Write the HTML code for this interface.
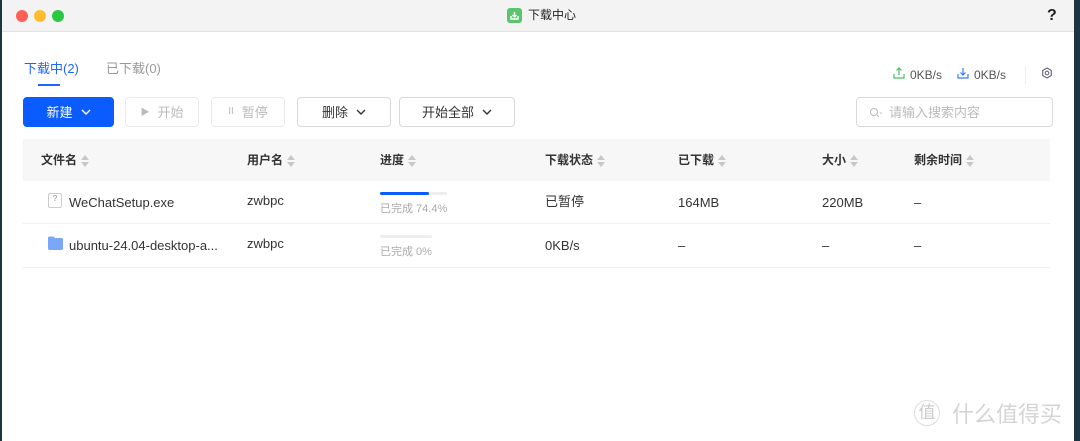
<!DOCTYPE html>
<html><head><meta charset="utf-8"><style>
*{box-sizing:border-box;margin:0;padding:0}
body{width:1080px;height:441px;overflow:hidden;background:#1d3540;font-family:"Liberation Sans","Noto Sans CJK SC",sans-serif;position:relative}
.win{position:absolute;left:2px;top:0;width:1072px;height:441px;background:#fff}
.tb{position:absolute;left:0;top:0;width:100%;height:32px;background:#f3f3f3;border-bottom:1px solid #e2e2e2}
.dot{position:absolute;top:10px;width:12px;height:12px;border-radius:50%}
.abs{position:absolute;white-space:nowrap;line-height:1.2}
.btn{position:absolute;top:97px;height:30px;border:1px solid #d9d9d9;border-radius:4px;background:#fff;font-size:13px;color:#333;display:flex;align-items:center;justify-content:center;gap:8px;line-height:1}
.dis{border-color:#ebebeb;color:#bbb}
.th{font-size:12px;color:#333;font-weight:bold;top:153px}
.sort{display:inline-block;vertical-align:middle;margin-left:4px;width:8px;height:12px;position:relative}
.sort:before{content:"";position:absolute;left:0;top:0;border:4px solid transparent;border-bottom:5px solid #c8c8c8;border-top:0}
.sort:after{content:"";position:absolute;left:0;top:7px;border:4px solid transparent;border-top:5px solid #c8c8c8;border-bottom:0}
.td{font-size:13px;color:#333}
.sm{font-size:11px;color:#aaa}
</style></head><body>
<div class="win">
<div class="tb">
<div class="dot" style="left:14px;background:#fe5f57"></div>
<div class="dot" style="left:32px;background:#febc2e"></div>
<div class="dot" style="left:50px;background:#28c840"></div>
<div class="abs" style="left:505px;top:8px;width:15px;height:15px;border-radius:3px;background:#5bc46f"><svg width="15" height="15" viewBox="0 0 15 15"><path d="M4 8v3h7V8M7.5 4v5M5.5 7l2 2 2-2" stroke="#fff" stroke-width="1.4" fill="none"/></svg></div>
<div class="abs" style="left:526px;top:8px;font-size:12px;color:#222">下载中心</div>
<div class="abs" style="left:1045px;top:6px;font-size:16px;color:#222;font-weight:bold">?</div>
</div>
<div class="abs" style="left:22px;top:61px;font-size:13px;color:#1a66ff">下载中(2)</div>
<div class="abs" style="left:36px;top:84px;width:22px;height:2px;background:#1a66ff"></div>
<div class="abs" style="left:104px;top:61px;font-size:13px;color:#999">已下载(0)</div>
<svg class="abs" style="left:891px;top:67px" width="12" height="12" viewBox="0 0 12 12"><path d="M1 7v4h10V7M6 1v7M3.5 3.5L6 1l2.5 2.5" stroke="#4cbf62" stroke-width="1.2" fill="none"/></svg>
<div class="abs" style="left:908px;top:68px;font-size:12px;color:#555">0KB/s</div>
<svg class="abs" style="left:955px;top:67px" width="12" height="12" viewBox="0 0 12 12"><path d="M1 7v4h10V7M6 1v7M3.5 5.5L6 8l2.5-2.5" stroke="#3b7cf5" stroke-width="1.2" fill="none"/></svg>
<div class="abs" style="left:972px;top:68px;font-size:12px;color:#555">0KB/s</div>
<div class="abs" style="left:1023px;top:66px;width:1px;height:18px;background:#eee"></div>
<svg class="abs" style="left:1039px;top:67px" width="12" height="12" viewBox="0 0 12 12"><path d="M6 1l4.3 2.5v5L6 11 1.7 8.5v-5z" stroke="#667" stroke-width="1.1" fill="none"/><circle cx="6" cy="6" r="1.8" stroke="#667" stroke-width="1.1" fill="none"/></svg>
<div class="btn" style="left:21px;width:91px;background:#0a5cff;border-color:#0a5cff;color:#fff">新建 <svg width="10" height="6"><path d="M1 1l4 4 4-4" stroke="#fff" stroke-width="1.4" fill="none"/></svg></div>
<div class="btn dis" style="left:123px;width:74px"><span style="font-size:9px">▶</span> 开始</div>
<div class="btn dis" style="left:209px;width:74px"><span style="font-size:10px">II</span> 暂停</div>
<div class="btn" style="left:295px;width:94px">删除 <svg width="10" height="6"><path d="M1 1l4 4 4-4" stroke="#333" stroke-width="1.4" fill="none"/></svg></div>
<div class="btn" style="left:397px;width:116px">开始全部 <svg width="10" height="6"><path d="M1 1l4 4 4-4" stroke="#333" stroke-width="1.4" fill="none"/></svg></div>
<div class="btn" style="left:854px;width:197px;justify-content:flex-start;padding-left:12px;color:#bbb"><svg width="14" height="10"><circle cx="5" cy="5" r="3.5" stroke="#bbb" fill="none"/><path d="M8 8l2 2M11 6h2" stroke="#bbb"/></svg><span style="margin-left:-2px">请输入搜索内容</span></div>
<div class="abs" style="left:21px;top:139px;width:1027px;height:42px;background:#f7f7f8"></div>
<div class="abs th" style="left:39px">文件名<span class="sort"></span></div>
<div class="abs th" style="left:245px">用户名<span class="sort"></span></div>
<div class="abs th" style="left:378px">进度<span class="sort"></span></div>
<div class="abs th" style="left:543px">下载状态<span class="sort"></span></div>
<div class="abs th" style="left:676px">已下载<span class="sort"></span></div>
<div class="abs th" style="left:820px">大小<span class="sort"></span></div>
<div class="abs th" style="left:912px">剩余时间<span class="sort"></span></div>
<div class="abs" style="left:21px;top:223px;width:1027px;height:1px;background:#efefef"></div>
<div class="abs" style="left:21px;top:267px;width:1027px;height:1px;background:#efefef"></div>
<div class="abs" style="left:46px;top:193px;width:14px;height:15px;border:1px solid #ccc;border-radius:2px;font-size:8px;color:#888;text-align:center;line-height:10px">?</div>
<div class="abs td" style="left:67px;top:195px">WeChatSetup.exe</div>
<div class="abs td" style="left:245px;top:193px">zwbpc</div>
<div class="abs" style="left:378px;top:192px;width:67px;height:3px;background:#eee;border-radius:2px"><div style="width:49px;height:3px;background:#0a5cff;border-radius:2px"></div></div>
<div class="abs sm" style="left:378px;top:203px">已完成 74.4%</div>
<div class="abs td" style="left:543px;top:194px">已暂停</div>
<div class="abs td" style="left:676px;top:195px">164MB</div>
<div class="abs td" style="left:820px;top:195px">220MB</div>
<div class="abs td" style="left:912px;top:195px">–</div>
<svg class="abs" style="left:46px;top:236px" width="15" height="14"><path d="M0 2a1.5 1.5 0 0 1 1.5-1.5h4l1.5 1.5h6.5A1.5 1.5 0 0 1 15 3.5v9a1.5 1.5 0 0 1-1.5 1.5h-12A1.5 1.5 0 0 1 0 12.5z" fill="#7aa7f7"/></svg>
<div class="abs td" style="left:67px;top:238px">ubuntu-24.04-desktop-a...</div>
<div class="abs td" style="left:245px;top:236px">zwbpc</div>
<div class="abs" style="left:378px;top:235px;width:52px;height:3px;background:#eee;border-radius:2px"></div>
<div class="abs sm" style="left:378px;top:246px">已完成 0%</div>
<div class="abs td" style="left:543px;top:238px">0KB/s</div>
<div class="abs td" style="left:676px;top:238px">–</div>
<div class="abs td" style="left:820px;top:238px">–</div>
<div class="abs td" style="left:912px;top:238px">–</div>
<div class="abs" style="left:912px;top:400px;width:26px;height:26px;border:1px solid #ddd;border-radius:50%;font-size:17px;color:#ccc;text-align:center;line-height:24px">值</div>
<div class="abs" style="left:950px;top:402px;font-size:22px;color:#d4d4d4">什么值得买</div>
</div>
</body></html>
